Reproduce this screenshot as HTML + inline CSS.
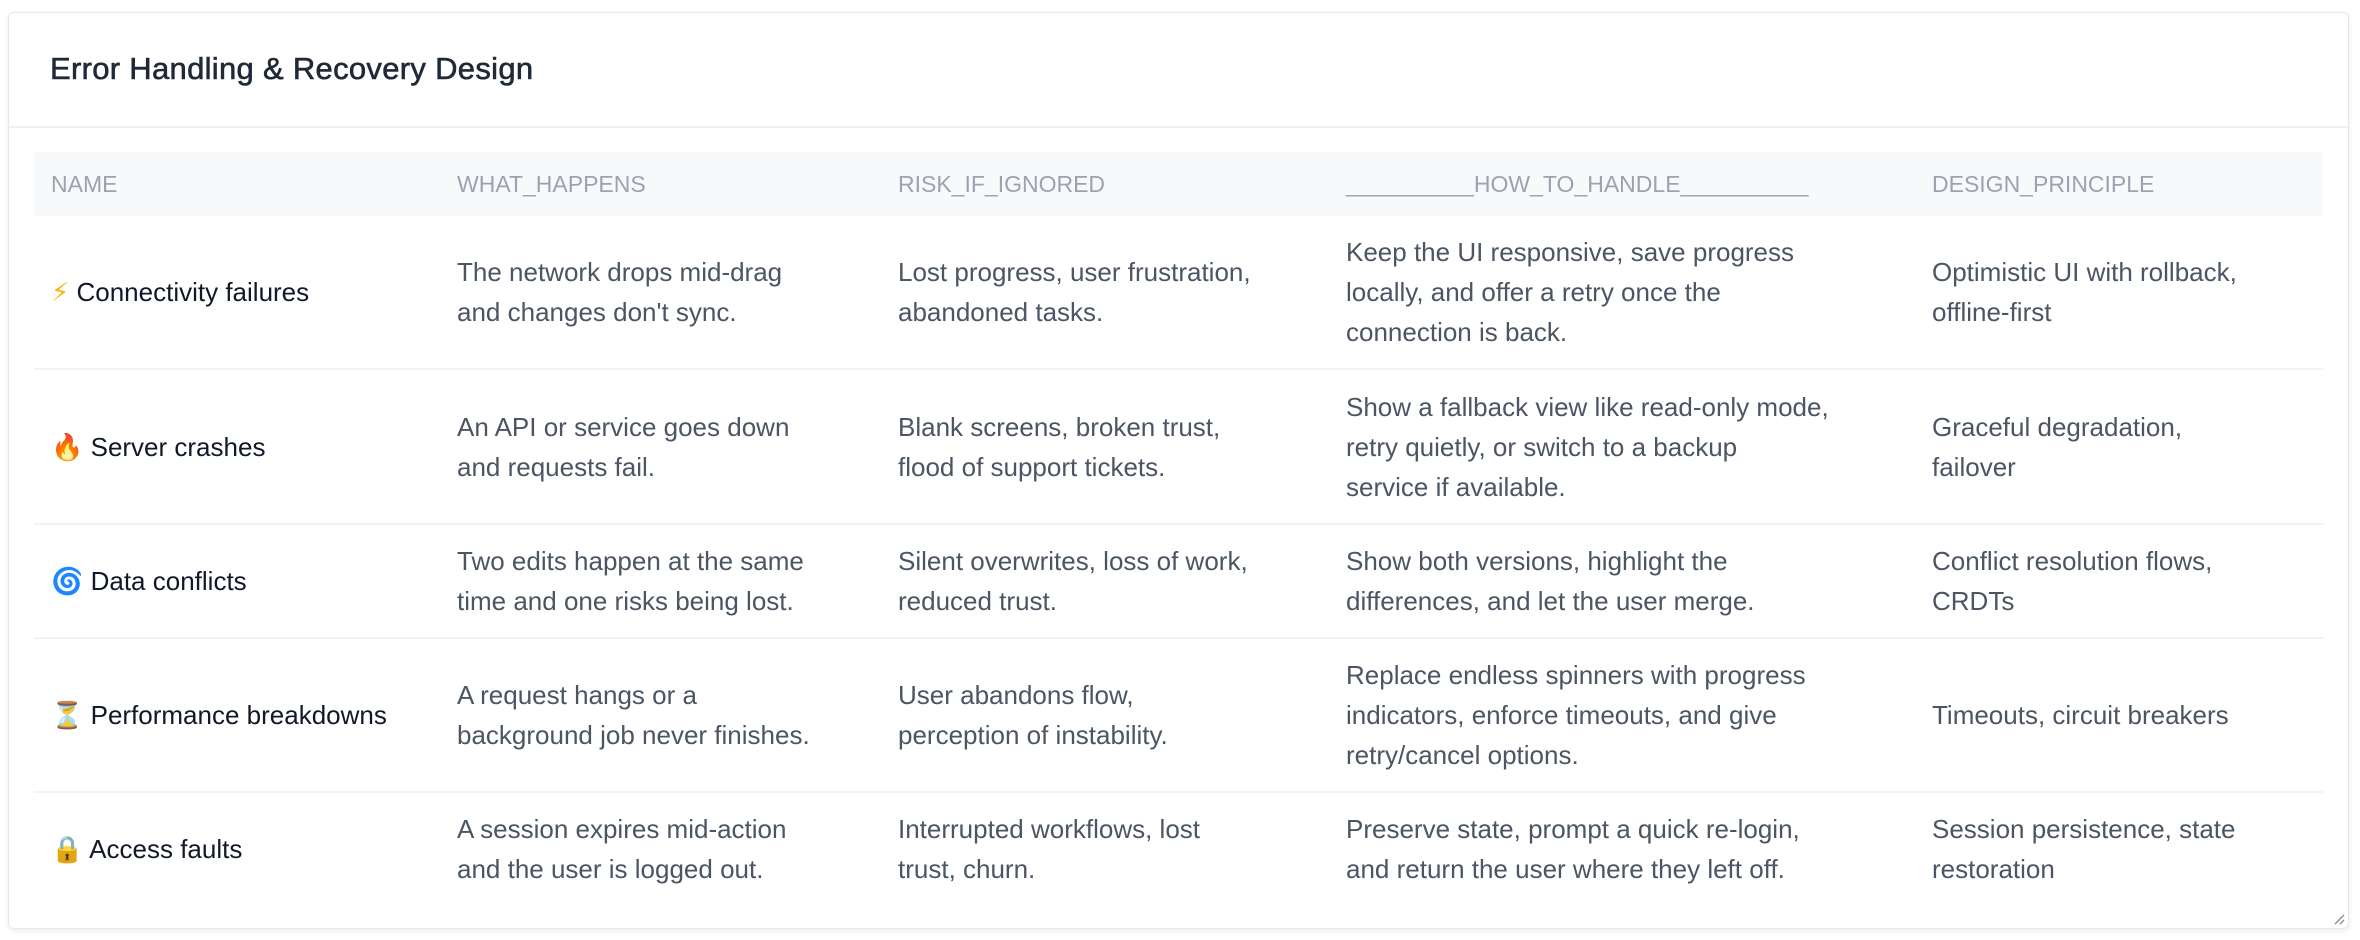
<!DOCTYPE html>
<html><head><meta charset="utf-8"><style>
*{box-sizing:border-box;margin:0;padding:0}
html,body{width:2360px;height:940px;background:#fff;overflow:hidden}
body{font-family:"Liberation Sans","DejaVu Sans",sans-serif}
.card{position:absolute;left:8px;top:12px;width:2341px;height:917px;border:1px solid #e5e7eb;border-radius:6px;background:#fff;box-shadow:0 2px 6px rgba(0,0,0,.08)}
.title{position:absolute;left:41px;top:38px;font-size:31px;color:#1f2937;font-weight:normal;-webkit-text-stroke:0.6px #1f2937;letter-spacing:0.3px}
.hr{position:absolute;left:0;right:0;top:113px;height:2px;background:#eef0f3}
table{position:absolute;left:25px;top:139px;width:2289px;border-collapse:collapse;table-layout:fixed}
th{background:#f8f9fb;height:64px;text-align:left;font-weight:normal;color:#9ca3af;font-size:23px;padding:0 17px;white-space:nowrap}
td{padding:16px 17px;font-size:26px;line-height:40px;color:#4b5563;white-space:nowrap;vertical-align:middle;border-bottom:2px solid #f1f3f5}
td.n{color:#111827}
tr:last-child td{border-bottom:none}
.grip{position:absolute;right:3px;bottom:3px;width:14px;height:14px}
</style></head><body>
<div class="card">
<div class="title">Error Handling &amp; Recovery Design</div>
<div class="hr"></div>
<table>
<colgroup><col style="width:406px"><col style="width:441px"><col style="width:448px"><col style="width:586px"><col style="width:408px"></colgroup>
<tr><th>NAME</th><th>WHAT_HAPPENS</th><th>RISK_IF_IGNORED</th><th>__________HOW_TO_HANDLE__________</th><th>DESIGN_PRINCIPLE</th></tr>
<tr style="height:152px"><td class="n"><span style="color:#f5b50a">⚡</span> Connectivity failures</td><td>The network drops mid-drag<br>and changes don't sync.</td><td>Lost progress, user frustration,<br>abandoned tasks.</td><td>Keep the UI responsive, save progress<br>locally, and offer a retry once the<br>connection is back.</td><td>Optimistic UI with rollback,<br>offline-first</td></tr>
<tr style="height:155px"><td class="n"><span style="color:#f0541e">🔥</span> Server crashes</td><td>An API or service goes down<br>and requests fail.</td><td>Blank screens, broken trust,<br>flood of support tickets.</td><td>Show a fallback view like read-only mode,<br>retry quietly, or switch to a backup<br>service if available.</td><td>Graceful degradation,<br>failover</td></tr>
<tr style="height:113px"><td class="n"><span style="color:#2f7fd8">🌀</span> Data conflicts</td><td>Two edits happen at the same<br>time and one risks being lost.</td><td>Silent overwrites, loss of work,<br>reduced trust.</td><td>Show both versions, highlight the<br>differences, and let the user merge.</td><td>Conflict resolution flows,<br>CRDTs</td></tr>
<tr style="height:154px"><td class="n"><span style="color:#a0652a">⏳</span> Performance breakdowns</td><td>A request hangs or a<br>background job never finishes.</td><td>User abandons flow,<br>perception of instability.</td><td>Replace endless spinners with progress<br>indicators, enforce timeouts, and give<br>retry/cancel options.</td><td>Timeouts, circuit breakers</td></tr>
<tr style="height:113px"><td class="n"><span style="color:#c99a2e">🔒</span> Access faults</td><td>A session expires mid-action<br>and the user is logged out.</td><td>Interrupted workflows, lost<br>trust, churn.</td><td>Preserve state, prompt a quick re-login,<br>and return the user where they left off.</td><td>Session persistence, state<br>restoration</td></tr>
</table>
<svg class="grip" viewBox="0 0 14 14"><path d="M13 4L4 13M13 9L9 13" stroke="#888" stroke-width="1.3"/></svg>
</div>
</body></html>
